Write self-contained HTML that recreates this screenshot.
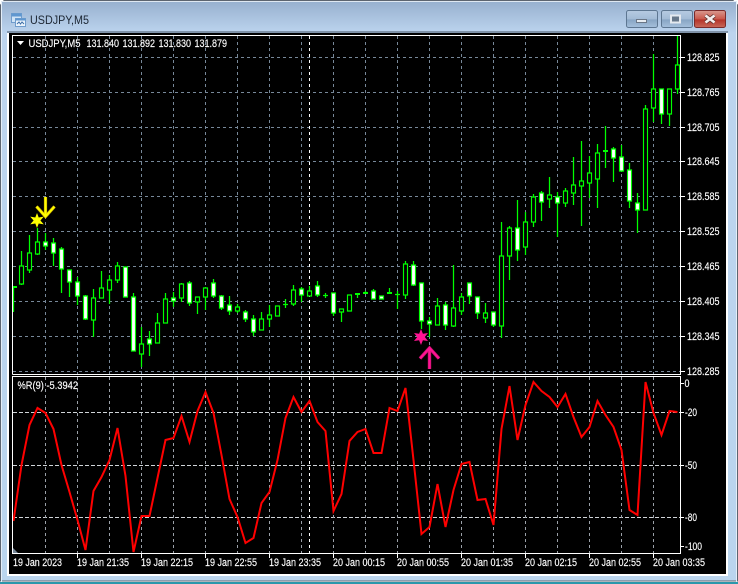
<!DOCTYPE html>
<html><head><meta charset="utf-8"><title>USDJPY,M5</title>
<style>
html,body{margin:0;padding:0;background:#fff;width:738px;height:584px;overflow:hidden}
svg{display:block;position:absolute;left:0;top:0}
text{font-family:"Liberation Sans",sans-serif;font-size:11px;fill:#fff;stroke:#fff;stroke-width:.15}
</style></head><body>
<svg width="738" height="584" viewBox="0 0 738 584" xmlns="http://www.w3.org/2000/svg">
<defs>
<linearGradient id="cap" x1="0" y1="0" x2="0" y2="1"><stop offset="0" stop-color="#97b0ce"/><stop offset="1" stop-color="#bcd4ee"/></linearGradient>
<linearGradient id="side" x1="0" y1="0" x2="0" y2="1"><stop offset="0" stop-color="#bcd4ee"/><stop offset="1" stop-color="#bad5ee"/></linearGradient>
<linearGradient id="btn" x1="0" y1="0" x2="0" y2="1"><stop offset="0" stop-color="#b6cbe2"/><stop offset=".5" stop-color="#a3bbd6"/><stop offset=".55" stop-color="#88a5c4"/><stop offset="1" stop-color="#a5c0dc"/></linearGradient>
<linearGradient id="red" x1="0" y1="0" x2="0" y2="1"><stop offset="0" stop-color="#d99a90"/><stop offset=".5" stop-color="#c9584c"/><stop offset=".55" stop-color="#b5342a"/><stop offset="1" stop-color="#c8695a"/></linearGradient>
<clipPath id="mainc"><rect x="13" y="36" width="667" height="338"/></clipPath>
<clipPath id="subc"><rect x="13" y="377" width="667" height="176"/></clipPath>
</defs>

<!-- window chrome -->
<path d="M4 0.5H733L737.5 5V581H0.5V5Z" fill="url(#side)" stroke="#5d6570"/>
<rect x="1" y="1" width="736" height="32" fill="url(#cap)"/>
<rect x="1" y="1" width="736" height="1" fill="#dfe8f2"/>
<rect x="1" y="2" width="1" height="580" fill="#e4eef8"/>
<rect x="736" y="2" width="1" height="580" fill="#e4eef8"/>
<rect x="0" y="582" width="738" height="2" fill="#2b97ab"/>
<rect x="7" y="31" width="721" height="545" fill="#fff"/>
<rect x="7" y="31" width="721" height="2" fill="#7f92a8"/>
<rect x="9" y="33" width="717" height="541" fill="#000"/>

<!-- title icon -->
<rect x="11.500" y="13.500" width="10" height="9" fill="#cfe3f6" stroke="#6f9ccc"/>
<rect x="11.500" y="13.500" width="10" height="3" fill="#5f97d0"/>
<rect x="15.500" y="18.500" width="10" height="8" fill="#eaf3fb" stroke="#6f9ccc"/>
<rect x="15.500" y="18.500" width="10" height="2" fill="#5f97d0"/>
<path d="M17 24l2-2 1.500 2 1.500-2 2 2" fill="none" stroke="#3f6fa8"/>
<text x="30" y="24" textLength="59" lengthAdjust="spacingAndGlyphs" style="font-size:12px;fill:#1c2633;stroke:none">USDJPY,M5</text>

<!-- caption buttons -->
<rect x="626.500" y="10.500" width="31" height="17" rx="2" fill="url(#btn)" stroke="#5d7691"/>
<rect x="636.500" y="19.500" width="10" height="3" fill="#e8edf2" stroke="#6a7686"/>
<rect x="661.500" y="10.500" width="31" height="17" rx="2" fill="url(#btn)" stroke="#5d7691"/>
<rect x="671" y="15.500" width="9" height="7" fill="#66778a" stroke="#e4e9ef" stroke-width="2"/>
<rect x="694.500" y="10.500" width="31" height="17" rx="2" fill="url(#red)" stroke="#7a2b2b"/>
<path d="M705.500 15.500l9 7M714.500 15.500l-9 7" stroke="#5c3430" stroke-width="4"/>
<path d="M705.500 15.500l9 7M714.500 15.500l-9 7" stroke="#f4eeee" stroke-width="2.600"/>

<!-- main grid -->
<g clip-path="url(#mainc)" fill="none">
<path stroke="#778899" stroke-dasharray="3 3" d="M13 57.500H680M13 92.500H680M13 127.500H680M13 161.500H680M13 196.500H680M13 231.500H680M13 266.500H680M13 301.500H680M13 336.500H680M13 371.500H680"/>
<path stroke="#778899" stroke-dasharray="3 3" d="M45.500 36V374M77.500 36V374M109.500 36V374M141.500 36V374M173.500 36V374M205.500 36V374M237.500 36V374M269.500 36V374M301.500 36V374M333.500 36V374M365.500 36V374M397.500 36V374M429.500 36V374M461.500 36V374M493.500 36V374M525.500 36V374M557.500 36V374M589.500 36V374M621.500 36V374M653.500 36V374"/>
<path stroke="#fff" stroke-dasharray="3 3" d="M309.500 36V374"/>

<!-- wicks -->
<path stroke="#00ff00" stroke-width="1.250" d="M13.500 286V312M21.500 251V285M29.500 235V273M37.500 228V255M45.500 233V250M53.500 238V266M61.500 247V293M69.500 270V297M77.500 277V305M85.500 295V320M93.500 289V337M101.500 271V298M109.500 275V304M117.500 262V283M133.500 293V351M141.500 327V367M149.500 331V356M157.500 313V343M165.500 293V323M173.500 292V307M181.500 283V302M189.500 281V306M197.500 297V314M205.500 287V310M213.500 279V298M221.500 295V310M229.500 296V315M237.500 304V313M245.500 310V322M253.500 315V336M261.500 312V330M269.500 305V327M285.500 299V308M293.500 285V306M301.500 287V302M309.500 286V296M317.500 281V297M325.500 293V298M333.500 293V316M341.500 309V322M357.500 294V298M365.500 291V294M373.500 289V299M389.500 288V294M397.500 291V309M405.500 261V299M413.500 261V286M421.500 283V329M429.500 317V337M437.500 298V325M445.500 302V330M453.500 265V327M461.500 293V315M469.500 283V304M477.500 297V319M485.500 303V323M493.500 312V327M501.500 222V338M509.500 226V280M517.500 200V261M525.500 212V255M533.500 194V227M541.500 191V221M549.500 177V208M557.500 192V237M565.500 188V207M573.500 157V205M581.500 141V226M589.500 156V198M597.500 144V208M605.500 126V168M613.500 147V182M621.500 145V172M629.500 163V208M637.500 193V233M645.500 105V210M653.500 54V122M661.500 89V124M669.500 89V126M677.500 36V94"/>

<!-- doji -->
<path stroke="#00ff00" stroke-width="2" d="M11 287H17M355 294H360M363 293H368M387 293H392M603 151H608"/>
<path stroke="#00ff00" stroke-width="1.250" d="M283 304.500H288M323 295.500H328M395 294.500H400"/>

<!-- hollow bodies -->
<path fill="#000" stroke="#00ff00" stroke-width="1.150" d="M19.500 266h4v18h-4zM27.500 253h4v17h-4zM35.500 242h4v12h-4zM91.500 298h4v22h-4zM99.500 288h4v10h-4zM107.500 280h4v10h-4zM115.500 266h4v14h-4zM139.500 344h4v10h-4zM155.500 323h4v20h-4zM163.500 299h4v24h-4zM179.500 284h4v14h-4zM195.500 297h4v5h-4zM203.500 288h4v9h-4zM235.500 307h4v4h-4zM259.500 319h4v11h-4zM267.500 315h4v4h-4zM275.500 306h4v10h-4zM291.500 290h4v14h-4zM307.500 291h4v5h-4zM339.500 309h4v3h-4zM347.500 295h4v16h-4zM403.500 264h4v31h-4zM435.500 306h4v19h-4zM451.500 308h4v18h-4zM459.500 297h4v14h-4zM483.500 313h4v5h-4zM499.500 256h4v70h-4zM507.500 228h4v28h-4zM523.500 222h4v25h-4zM531.500 197h4v25h-4zM547.500 195h4v4h-4zM563.500 191h4v12h-4zM571.500 185h4v8h-4zM579.500 181h4v5h-4zM587.500 173h4v10h-4zM595.500 153h4v26h-4zM643.500 109h4v101h-4zM651.500 89h4v19h-4zM667.500 89h4v25h-4zM675.500 65h4v24h-4z"/>

<!-- white bodies -->
<path fill="#fff" stroke="#00ff00" stroke-width="1.150" d="M43.500 242h4v4h-4zM51.500 243h4v10h-4zM59.500 249h4v20h-4zM67.500 270h4v12h-4zM75.500 282h4v14h-4zM83.500 296h4v23h-4zM123.500 267h4v30h-4zM131.500 297h4v54h-4zM147.500 339h4v5h-4zM171.500 298h4v3h-4zM187.500 283h4v20h-4zM211.500 283h4v13h-4zM219.500 296h4v12h-4zM227.500 305h4v6h-4zM243.500 312h4v7h-4zM251.500 319h4v13h-4zM299.500 289h4v6h-4zM315.500 286h4v9h-4zM331.500 293h4v20h-4zM371.500 291h4v8h-4zM379.500 296h4v3h-4zM411.500 265h4v20h-4zM419.500 283h4v38h-4zM427.500 321h4v3h-4zM443.500 305h4v20h-4zM467.500 283h4v13h-4zM475.500 297h4v16h-4zM491.500 312h4v13h-4zM515.500 228h4v22h-4zM539.500 193h4v9h-4zM555.500 197h4v6h-4zM611.500 149h4v9h-4zM619.500 157h4v14h-4zM627.500 170h4v31h-4zM635.500 203h4v7h-4zM659.500 89h4v25h-4z"/>

<!-- arrows and stars -->
<path stroke="#c8a800" stroke-width="3.200" d="M45.500 197V216M36.500 206.500L45.500 216.500L54.500 206.500"/>
<path stroke="#ffff00" stroke-width="2" d="M45.500 197V216M36.500 206.500L45.500 216.500L54.500 206.500"/>
<polygon transform="translate(37,220.500)" fill="#ffff00" points="0,-7.500 1.700,-3 6.800,-3.900 3.400,0 6.800,3.900 1.700,3 0,7.500 -1.700,3 -6.800,3.900 -3.400,0 -6.800,-3.900 -1.700,-3"/>
<polygon transform="translate(421,337)" fill="#ff1493" points="0,-8 1.900,-3.300 7,-4 3.800,0 7,4 1.900,3.300 0,8 -1.900,3.300 -7,4 -3.800,0 -7,-4 -1.900,-3.300"/>
<path stroke="#c8106e" stroke-width="3.400" d="M429.500 369V349M420 358.500L429.500 348L439 358.500"/>
<path stroke="#ff1493" stroke-width="2" d="M429.500 369V349M420 358.500L429.500 348L439 358.500"/>
</g>

<!-- sub-window grid -->
<g clip-path="url(#subc)" fill="none">
<path stroke="#d0d4d8" stroke-dasharray="4 2" d="M13 412.500H680M13 465.500H680M13 517.500H680"/>
<path stroke="#9aa0a8" stroke-dasharray="3 3" d="M45.500 377V553M77.500 377V553M109.500 377V553M141.500 377V553M173.500 377V553M205.500 377V553M237.500 377V553M269.500 377V553M301.500 377V553M333.500 377V553M365.500 377V553M397.500 377V553M429.500 377V553M461.500 377V553M493.500 377V553M525.500 377V553M557.500 377V553M589.500 377V553M621.500 377V553M653.500 377V553"/>
<path stroke="#fff" stroke-dasharray="3 3" d="M309.500 377V553"/>
<polyline fill="none" stroke="#ff0000" stroke-width="2" stroke-linejoin="miter" points="13.500,521 21.500,465 29.500,425 37.500,408 45.500,413 53.500,429 61.500,465 69.500,492 77.500,520 85.500,550 93.500,491 101.500,477 109.500,460 117.500,428 125.500,476 133.500,552 141.500,516 149.500,516 157.500,478 165.500,440 173.500,438 181.500,416 189.500,442 197.500,411 205.500,392 213.500,413 221.500,455 229.500,499 237.500,517 245.500,543 253.500,538 261.500,503 269.500,492 277.500,460 285.500,418 293.500,397 301.500,412 309.500,401 317.500,422 325.500,431 333.500,511 341.500,494 349.500,441 357.500,432 365.500,429 373.500,453 381.500,453 389.500,408 397.500,411 405.500,388 413.500,460 421.500,534 429.500,527 437.500,484 445.500,527 453.500,490 461.500,464 469.500,462 477.500,500 485.500,499 493.500,525 501.500,429 509.500,386 517.500,440 525.500,405 533.500,382 541.500,391 549.500,397 557.500,407 565.500,394 573.500,417 581.500,437 589.500,427 597.500,401 605.500,415 613.500,427 621.500,450 629.500,510 637.500,515 645.500,382 653.500,413 661.500,435 669.500,411 677.500,412"/>
</g>
<polygon points="13,548 18,553 13,553" fill="#778899"/>

<!-- frames -->
<path fill="none" stroke="#fff" d="M12.500 374.500V35.500H680.500V374.500H12.500M12.500 376.500H680.500V553.500H12.500Z"/>
<path stroke="#fff" d="M681 57.500h4M681 92.500h4M681 127.500h4M681 161.500h4M681 196.500h4M681 231.500h4M681 266.500h4M681 301.500h4M681 336.500h4M681 371.500h4M681 383.500h3M681 412.500h3M681 465.500h3M681 517.500h3M681 546.500h3M77.500 554v4M141.500 554v4M205.500 554v4M269.500 554v4M333.500 554v4M397.500 554v4M461.500 554v4M525.500 554v4M589.500 554v4M653.500 554v4"/>

<!-- header text -->
<polygon points="17,41 24,41 20.500,45" fill="#fff"/>
<text x="28.500" y="47" textLength="52" lengthAdjust="spacingAndGlyphs">USDJPY,M5</text>
<text x="86.500" y="47" textLength="32.500" lengthAdjust="spacingAndGlyphs">131.840</text>
<text x="122.500" y="47" textLength="32.500" lengthAdjust="spacingAndGlyphs">131.892</text>
<text x="158.500" y="47" textLength="32.500" lengthAdjust="spacingAndGlyphs">131.830</text>
<text x="194.500" y="47" textLength="32.500" lengthAdjust="spacingAndGlyphs">131.879</text>
<text x="17.500" y="389" textLength="60.500" lengthAdjust="spacingAndGlyphs">%R(9) -5.3942</text>

<!-- price labels -->
<g>
<text x="687" y="61" textLength="32.500" lengthAdjust="spacingAndGlyphs">128.825</text>
<text x="687" y="96" textLength="32.500" lengthAdjust="spacingAndGlyphs">128.765</text>
<text x="687" y="131" textLength="32.500" lengthAdjust="spacingAndGlyphs">128.705</text>
<text x="687" y="165" textLength="32.500" lengthAdjust="spacingAndGlyphs">128.645</text>
<text x="687" y="200" textLength="32.500" lengthAdjust="spacingAndGlyphs">128.585</text>
<text x="687" y="235" textLength="32.500" lengthAdjust="spacingAndGlyphs">128.525</text>
<text x="687" y="270" textLength="32.500" lengthAdjust="spacingAndGlyphs">128.465</text>
<text x="687" y="305" textLength="32.500" lengthAdjust="spacingAndGlyphs">128.405</text>
<text x="687" y="340" textLength="32.500" lengthAdjust="spacingAndGlyphs">128.345</text>
<text x="687" y="375" textLength="32.500" lengthAdjust="spacingAndGlyphs">128.285</text>
<text x="684.500" y="387" textLength="5" lengthAdjust="spacingAndGlyphs">0</text>
<text x="685" y="416" textLength="12" lengthAdjust="spacingAndGlyphs">-20</text>
<text x="685" y="469" textLength="12" lengthAdjust="spacingAndGlyphs">-50</text>
<text x="685" y="521" textLength="12" lengthAdjust="spacingAndGlyphs">-80</text>
<text x="685" y="550" textLength="17" lengthAdjust="spacingAndGlyphs">-100</text>
</g>

<!-- time labels -->
<g>
<text x="13" y="566" textLength="49" lengthAdjust="spacingAndGlyphs">19 Jan 2023</text>
<text x="77" y="566" textLength="52" lengthAdjust="spacingAndGlyphs">19 Jan 21:35</text>
<text x="141" y="566" textLength="52" lengthAdjust="spacingAndGlyphs">19 Jan 22:15</text>
<text x="205" y="566" textLength="52" lengthAdjust="spacingAndGlyphs">19 Jan 22:55</text>
<text x="269" y="566" textLength="52" lengthAdjust="spacingAndGlyphs">19 Jan 23:35</text>
<text x="333" y="566" textLength="52" lengthAdjust="spacingAndGlyphs">20 Jan 00:15</text>
<text x="397" y="566" textLength="52" lengthAdjust="spacingAndGlyphs">20 Jan 00:55</text>
<text x="461" y="566" textLength="52" lengthAdjust="spacingAndGlyphs">20 Jan 01:35</text>
<text x="525" y="566" textLength="52" lengthAdjust="spacingAndGlyphs">20 Jan 02:15</text>
<text x="589" y="566" textLength="52" lengthAdjust="spacingAndGlyphs">20 Jan 02:55</text>
<text x="653" y="566" textLength="52" lengthAdjust="spacingAndGlyphs">20 Jan 03:35</text>
</g>
</svg>
</body></html>
